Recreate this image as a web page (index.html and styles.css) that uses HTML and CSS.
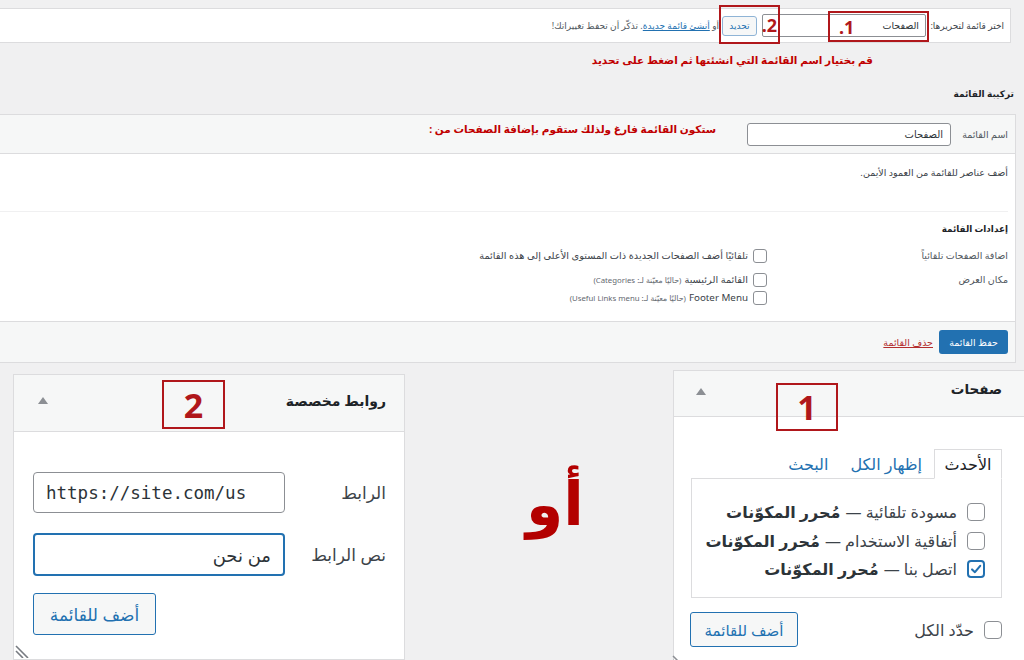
FILE: index.html
```html
<!DOCTYPE html>
<html lang="ar" dir="rtl">
<head>
<meta charset="utf-8">
<title>القوائم</title>
<link rel="stylesheet" href="styles.css">
</head>
<body>
<div class="manage-bar">
  <span class="mb-label">اختر قائمة لتحريرها:</span>
  <span class="mb-select">الصفحات</span>
  <span class="mb-btn">تحديد</span>
  <span class="mb-hint">أو <a href="#" class="mb-link">أنشئ قائمة جديدة</a>. تذكّر أن تحفظ تغييراتك!</span>
  <span class="mark mark-1">1.</span>
  <span class="mark mark-2">2.</span>
</div>

<p class="note">قم بختيار اسم القائمة التي انشئتها ثم اضغط على تحديد</p>

<h2 class="structure-title">تركيبة القائمة</h2>

<div class="menu-box">
  <div class="menu-header">
    <span class="mh-label">اسم القائمة</span>
    <span class="mh-input">الصفحات</span>
    <span class="mh-note">ستكون القائمة فارغ ولذلك ستقوم بإضافة الصفحات من :</span>
  </div>
  <div class="menu-body">
    <div class="drop-zone">أضف عناصر للقائمة من العمود الأيمن.</div>
    <div class="settings">
      <h3 class="settings-title">إعدادات القائمة</h3>
      <div class="setting-row row-auto">
        <span class="setting-label">اضافة الصفحات تلقائياً</span>
        <div class="setting-opts">
          <label class="opt"><span class="cb-sm"></span>تلقائيًا أضف الصفحات الجديدة ذات المستوى الأعلى إلى هذه القائمة</label>
        </div>
      </div>
      <div class="setting-row row-loc">
        <span class="setting-label">مكان العرض</span>
        <div class="setting-opts">
          <label class="opt"><span class="cb-sm"></span>القائمة الرئيسية <span class="loc-note">(حاليًا معيّنة لـ: Categories)</span></label>
          <label class="opt"><span class="cb-sm"></span>Footer Menu <span class="loc-note">(حاليًا معيّنة لـ: Useful Links menu)</span></label>
        </div>
      </div>
    </div>
  </div>
  <div class="menu-footer">
    <span class="btn-primary">حفظ القائمة</span>
    <a href="#" class="delete-link">حذف القائمة</a>
  </div>
</div>

<div class="lower">
  <div class="panel pages-panel">
    <div class="panel-head ph-pages">
      <span class="panel-title">صفحات</span>
      <svg class="arrow" width="10" height="7" viewBox="0 0 10 7"><polygon points="0,7 5,0 10,7" fill="#8c8f94"/></svg>
      <span class="mark mark-big mark-p1">1</span>
    </div>
    <div class="pages-body">
      <div class="tabs">
        <span class="tab tab-active">الأحدث</span>
        <span class="tab">إظهار الكل</span>
        <span class="tab">البحث</span>
      </div>
      <div class="page-list">
        <label class="page-item"><span class="cb"></span>مسودة تلقائية — <b>مُحرر المكوّنات</b></label>
        <label class="page-item"><span class="cb"></span>أتفاقية الاستخدام — <b>مُحرر المكوّنات</b></label>
        <label class="page-item"><span class="cb cb-checked"><svg width="16" height="16" viewBox="0 0 16 16"><path d="M3.5 8.5 L6.8 11.6 L12.8 4.4" fill="none" stroke="#2271b1" stroke-width="2.4" stroke-linecap="round" stroke-linejoin="round"/></svg></span>اتصل بنا — <b>مُحرر المكوّنات</b></label>
      </div>
      <div class="select-row">
        <label class="select-all"><span class="cb"></span>حدّد الكل</label>
        <span class="btn-secondary btn-pages">أضف للقائمة</span>
      </div>
    </div>
    <svg class="resize resize-pages" width="14" height="14" viewBox="0 0 14 14"><path d="M2 4 L10 12 M2 8 L6 12" stroke="#8c8f94" stroke-width="1.5"/></svg>
  </div>

  <div class="or-col"><span class="or">أو</span></div>

  <div class="panel links-panel">
    <div class="panel-head ph-links">
      <span class="panel-title">روابط مخصصة</span>
      <svg class="arrow" width="10" height="7" viewBox="0 0 10 7"><polygon points="0,7 5,0 10,7" fill="#8c8f94"/></svg>
      <span class="mark mark-big mark-p2">2</span>
    </div>
    <div class="links-body">
      <div class="field">
        <span class="field-label">الرابط</span>
        <span class="field-input url">https://site.com/us</span>
      </div>
      <div class="field">
        <span class="field-label">نص الرابط</span>
        <span class="field-input focused">من نحن</span>
      </div>
      <span class="btn-secondary btn-links">أضف للقائمة</span>
    </div>
    <svg class="resize resize-links" width="16" height="16" viewBox="0 0 16 16"><path d="M1 4 L13 16 M1 9 L8 16" stroke="#787c82" stroke-width="1.6"/></svg>
  </div>
</div>
</body>
</html>
```

FILE: styles.css
```css
* { box-sizing: border-box; }

html, body {
  margin: 0;
  padding: 0;
}

body {
  width: 1024px;
  height: 660px;
  overflow: hidden;
  background: #f0f0f1;
  direction: rtl;
  font-family: "Noto Sans", "DejaVu Sans", sans-serif;
  color: #1d2327;
}

/* ---------- top manage bar ---------- */
.manage-bar {
  position: relative;
  margin: 8px 13px 0 -2px;
  height: 35px;
  background: #fff;
  border: 1px solid #dcdcde;
  display: flex;
  align-items: center;
  padding-right: 6px;
  font-size: 9px;
  color: #3c434a;
  white-space: nowrap;
}

.manage-bar > span { flex: none; }

.mb-label { width: 73px; }

.mb-select {
  width: 164px;
  height: 23px;
  margin-right: 5px;
  border: 1px solid #8c8f94;
  border-radius: 2px;
  display: flex;
  align-items: center;
  padding-right: 6px;
  font-size: 9.5px;
  color: #2c3338;
}

.mb-btn {
  width: 35px;
  height: 20px;
  margin-right: 5px;
  border: 1px solid #8fb4d6;
  border-radius: 3px;
  background: #f6f7f7;
  color: #2271b1;
  display: flex;
  align-items: center;
  justify-content: center;
  font-size: 9px;
}

.mb-hint {
  margin-right: 3px;
  font-size: 9px;
  color: #50575e;
}

.mb-link { color: #2271b1; }

.mark {
  position: absolute;
  border: 2px solid #b0171b;
  color: #b0171b;
  font-weight: 700;
  display: flex;
  align-items: center;
}

.mark-1 {
  top: 2px;
  right: 81px;
  width: 101px;
  height: 31px;
  justify-content: flex-end;
  padding-left: 9px;
  font-size: 18px;
}

.mark-2 {
  top: -4px;
  right: 230px;
  width: 61px;
  height: 39px;
  justify-content: flex-start;
  padding-right: 1px;
  font-size: 18px;
}

/* ---------- notes & titles ---------- */
.note {
  margin: 9px 151px 0 0;
  font-size: 10.5px;
  line-height: 16px;
  font-weight: 700;
  color: #c00000;
}

.structure-title {
  margin: 19px 10px 0 0;
  font-size: 9px;
  line-height: 14px;
  font-weight: 700;
  color: #1d2327;
}

/* ---------- menu box ---------- */
.menu-box {
  margin: 13px 8px 0 -2px;
  border: 1px solid #dcdcde;
  background: #fff;
}

.menu-header {
  height: 39px;
  background: #f6f7f7;
  border-bottom: 1px solid #dcdcde;
  display: flex;
  align-items: center;
  padding-right: 7px;
  font-size: 9.5px;
}

.mh-label { color: #50575e; width: 50px; }

.mh-input {
  width: 204px;
  height: 23px;
  margin-right: 7px;
  border: 1px solid #8c8f94;
  border-radius: 3px;
  background: #fff;
  display: flex;
  align-items: center;
  padding-right: 7px;
  font-size: 10px;
  color: #2c3338;
}

.mh-note {
  align-self: flex-start;
  margin: 6px 31px 0 0;
  font-size: 10.5px;
  line-height: 16px;
  font-weight: 700;
  color: #c00000;
}

.menu-body {
  padding-right: 7px;
}

.drop-zone {
  height: 58px;
  padding-top: 12px;
  border-bottom: 1px solid #f0f0f1;
  font-size: 9.5px;
  line-height: 14px;
  color: #3c434a;
}

.settings {
  height: 109px;
  padding-top: 10px;
  font-size: 9.8px;
  color: #3c434a;
}

.settings-title {
  margin: 0;
  font-size: 8.8px;
  line-height: 14px;
  font-weight: 700;
  color: #1d2327;
}

.setting-row {
  display: grid;
  grid-template-columns: 241px auto;
}

.row-auto {
  margin-top: 10px;
  line-height: 20px;
}

.row-loc {
  margin-top: 5px;
  line-height: 18px;
}

.setting-label { color: #50575e; font-size: 9.5px; }

.opt {
  display: flex;
  align-items: center;
}

.cb-sm {
  width: 14px;
  height: 14px;
  margin-left: 5px;
  border: 1px solid #8c8f94;
  border-radius: 3px;
  background: #fff;
  flex: none;
}

.loc-note {
  margin-right: 3px;
  font-size: 7.8px;
  color: #646970;
}

.menu-footer {
  height: 41px;
  background: #f6f7f7;
  border-top: 1px solid #dcdcde;
  display: flex;
  align-items: center;
  padding-right: 7px;
}

.btn-primary {
  width: 69px;
  height: 24px;
  border-radius: 3px;
  background: #2271b1;
  color: #fff;
  font-size: 9.5px;
  display: flex;
  align-items: center;
  justify-content: center;
}

.delete-link {
  margin-right: 6px;
  font-size: 9.5px;
  color: #b32d2e;
}

/* ---------- lower panels ---------- */
.lower {
  display: flex;
  align-items: flex-start;
}

.panel {
  position: relative;
  background: #fff;
  border: 1px solid #dcdcde;
}

.panel-head {
  position: relative;
  background: #f6f7f7;
  border-bottom: 1px solid #dcdcde;
  display: flex;
  align-items: center;
  justify-content: space-between;
}

.panel-title {
  font-weight: 700;
  color: #1d2327;
}

.pages-panel {
  width: 353px;
  height: 300px;
  margin: 7px -2px 0 0;
}

.ph-pages {
  height: 46px;
  padding: 0 23px 9px 22px;
}

.ph-pages .panel-title { font-size: 13.5px; }

.ph-pages .arrow { margin-top: 4px; }

.mark-big {
  border-width: 2px;
  justify-content: center;
  font-size: 34px;
  line-height: 1;
}

.mark-p1 {
  top: 12px;
  left: 102px;
  width: 62px;
  height: 48px;
}

.mark-p2 {
  top: 5px;
  left: 148px;
  width: 63px;
  height: 49px;
}

.pages-body {
  padding: 32px 23px 0 17px;
}

.tabs {
  display: flex;
  align-items: flex-end;
  height: 29px;
  font-size: 16px;
}

.tab {
  height: 29px;
  padding: 0 11px;
  display: flex;
  align-items: center;
  color: #2271b1;
}

.tab-active {
  width: 68px;
  justify-content: center;
  padding: 0;
  margin-left: 1px;
  border: 1px solid #dcdcde;
  border-bottom: 1px solid #fff;
  background: #fff;
  color: #1d2327;
  position: relative;
  z-index: 1;
  margin-bottom: -1px;
  height: 30px;
}

.page-list {
  height: 120px;
  border: 1px solid #dcdcde;
  padding: 19px 16px 0 0;
  font-size: 16px;
  color: #3c434a;
}

.page-item {
  display: flex;
  align-items: center;
  height: 28.5px;
}

.page-item b {
  margin-right: 5px;
  color: #2c3338;
}

.cb {
  width: 18px;
  height: 18px;
  margin-left: 10px;
  border: 1px solid #8c8f94;
  border-radius: 4px;
  background: #fff;
  flex: none;
  display: flex;
  align-items: center;
  justify-content: center;
}

.cb-checked {
  border: 2px solid #2271b1;
}

.select-row {
  margin-top: 14px;
  display: flex;
  align-items: center;
  justify-content: space-between;
}

.select-all {
  display: flex;
  align-items: center;
  font-size: 16px;
  color: #3c434a;
}

.btn-secondary {
  display: flex;
  align-items: center;
  justify-content: center;
  border: 1px solid #2271b1;
  border-radius: 3px;
  background: #f6f7f7;
  color: #2271b1;
}

.btn-pages {
  width: 108px;
  height: 35px;
  font-size: 15px;
  margin-left: -1px;
}

.resize { position: absolute; }

.resize-pages {
  left: -3px;
  top: 281px;
}

/* "or" */
.or-col {
  width: 268px;
  padding: 89px 0 0 32px;
  text-align: center;
}

.or {
  font-size: 60px;
  line-height: 100px;
  font-weight: 700;
  color: #b30000;
}

/* links panel */
.links-panel {
  width: 392px;
  height: 286px;
  margin-top: 11px;
}

.ph-links {
  height: 57px;
  padding: 0 18px 6px 24px;
}

.ph-links .panel-title { font-size: 14px; }

.links-body {
  display: flex;
  flex-direction: column;
  padding: 40px 18px 0 19px;
}

.field {
  display: flex;
  align-items: center;
  justify-content: space-between;
  margin-bottom: 20px;
}

.field + .field { margin-bottom: 17px; }

.field-label {
  font-size: 17px;
  color: #3c434a;
}

.field-input {
  width: 252px;
  height: 41px;
  border: 1px solid #8c8f94;
  border-radius: 4px;
  display: flex;
  align-items: center;
  padding: 0 12px;
  font-size: 18px;
  color: #2c3338;
}

.url {
  direction: ltr;
  font-family: "DejaVu Sans Mono", "Liberation Mono", monospace;
  font-size: 17.5px;
}

.focused {
  height: 43px;
  border: 2px solid #2271b1;
}

.btn-links {
  align-self: flex-end;
  width: 123px;
  height: 42px;
  font-size: 17px;
}

.resize-links {
  left: 1px;
  bottom: 1px;
}
```
